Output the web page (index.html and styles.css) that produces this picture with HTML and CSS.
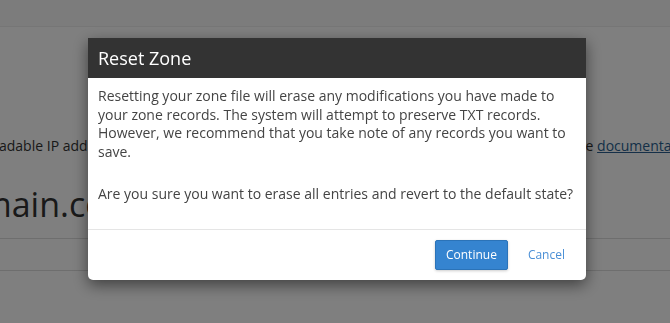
FILE: index.html
```html
<!DOCTYPE html>
<html lang="en">
<head>
  <meta charset="UTF-8" />
  <meta name="viewport" content="width=device-width, initial-scale=1.0"/>
  <title>Zone Editor</title>
  <link rel="stylesheet" href="styles.css">
</head>
<body>
  <div class="topbar"></div>

  <div class="page">
    <div class="note">
      <span class="note-left">a readable IP address. For more information, read</span>
      <span class="note-right">the <a href="#">documentation</a>.</span>
    </div>
    <h1 class="domain">domain.com</h1>
    <div class="rule"></div>
    <div class="rule"></div>
  </div>

  <div class="overlay"></div>

  <div class="modal">
    <div class="modal-header">Reset Zone</div>
    <div class="modal-body">
      <p class="intro">Resetting your zone file will erase any modifications you have made to your zone records. The system will attempt to preserve TXT records. However, we recommend that you take note of any records you want to save.</p>
      <p>Are you sure you want to erase all entries and revert to the default state?</p>
    </div>
    <div class="modal-footer">
      <button class="btn-continue">Continue</button>
      <a href="#" class="btn-cancel">Cancel</a>
    </div>
  </div>
</body>
</html>
```

FILE: styles.css
```css
* { margin: 0; padding: 0; box-sizing: border-box; }

body {
  font-family: 'Open Sans', sans-serif;
  font-size: 14px;
  line-height: 18.5px;
  color: #333;
  background: #fff;
  overflow: hidden;
  height: 323px;
}

.topbar {
  height: 27px;
  background: #f8f8f8;
  border-bottom: 1px solid #ececec;
}

.page {
  width: 900px;
}

.note {
  display: flex;
  margin: 110px 0 0 -26px;
  white-space: nowrap;
}

.note-left {
  width: 598px;
  flex-shrink: 0;
  overflow: hidden;
}

.note a {
  color: #2a5f90;
}

.domain {
  font-size: 34px;
  font-weight: normal;
  line-height: 40px;
  margin: 28px 0 14px -61px;
}

.rule {
  height: 32px;
  border-top: 1px solid #ddd;
}

.overlay {
  position: fixed;
  top: 0; left: 0;
  width: 100%; height: 100%;
  background: rgba(0,0,0,0.5);
}

.modal {
  position: fixed;
  top: 38px;
  left: 88px;
  width: 498px;
  background: #fff;
  border-radius: 0 0 5px 5px;
  box-shadow: 0 5px 15px rgba(0,0,0,0.5);
}

.modal-header {
  height: 40px;
  background: #333;
  color: #fff;
  font-size: 18px;
  line-height: 40px;
  padding: 0 10px;
}

.modal-body {
  padding: 9px 10px 15px;
  color: #444;
}

.modal-body p {
  margin-bottom: 10px;
}

.modal-body .intro {
  margin-bottom: 24px;
}

.modal-footer {
  display: flex;
  justify-content: flex-end;
  align-items: center;
  gap: 20px;
  padding: 10px 21px 10px 10px;
  border-top: 1px solid #e5e5e5;
}

.btn-continue {
  font-family: 'Open Sans', sans-serif;
  font-size: 12px;
  height: 30px;
  padding: 0 10px;
  color: #fff;
  background: #3584d0;
  border: 1px solid #2b73b8;
  border-radius: 2px;
  box-shadow: 0 1px 3px rgba(0,0,0,0.2);
}

.btn-cancel {
  font-size: 12px;
  color: #4a8fd6;
  text-decoration: none;
  padding-top: 2px;
}
```
